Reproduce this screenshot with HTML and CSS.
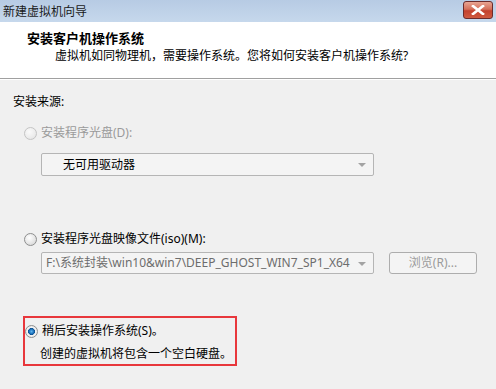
FILE: index.html
```html
<!DOCTYPE html>
<html lang="zh-CN">
<head>
    <meta charset="UTF-8">
    <title>新建虚拟机向导</title>
    <link rel="stylesheet" href="styles.css">
</head>
<body>
    <div class="dialog">
        <!-- Title bar -->
        <div class="titlebar">
            <span class="title-text">新建虚拟机向导</span>
            <span class="close-btn">
                <svg width="14" height="10" viewBox="0 0 14 10">
                    <path d="M2 1 L12 9 M12 1 L2 9" stroke="#fff" stroke-width="2.6" stroke-linecap="square"/>
                </svg>
            </span>
        </div>

        <!-- Header -->
        <div class="header">
            <div class="header-title">安装客户机操作系统</div>
            <div class="header-sub">虚拟机如同物理机，需要操作系统。您将如何安装客户机操作系统?</div>
        </div>

        <!-- Body -->
        <div class="content">
            <div class="group-label">安装来源:</div>

            <div class="option option-disc">
                <span class="radio disabled"></span>
                <span class="label disabled-text">安装程序光盘(D):</span>
            </div>
            <div class="combo combo-disc">
                <span class="combo-text">无可用驱动器</span>
                <span class="arrow"></span>
            </div>

            <div class="option option-iso">
                <span class="radio"></span>
                <span class="label">安装程序光盘映像文件(iso)(M):</span>
            </div>
            <div class="iso-row">
                <div class="combo combo-iso">
                    <span class="combo-text path">F:\系统封装\win10&amp;win7\DEEP_GHOST_WIN7_SP1_X64</span>
                    <span class="arrow"></span>
                </div>
                <div class="browse-btn">浏览(R)...</div>
            </div>

            <div class="highlight">
                <div class="option option-later">
                    <span class="radio checked"></span>
                    <span class="label">稍后安装操作系统(S)。</span>
                </div>
                <div class="later-note">创建的虚拟机将包含一个空白硬盘。</div>
            </div>
        </div>
    </div>
</body>
</html>
```

FILE: styles.css
```css
body {
    margin: 0;
    font-family: "Noto Sans", "Noto Sans CJK SC", sans-serif;
    font-size: 12px;
    line-height: 16px;
    color: #000;
}
.dialog {
    width: 496px;
    height: 389px;
    background-color: #f0f0f0;
    overflow: hidden;
}
.titlebar {
    height: 22px;
    display: flex;
    align-items: center;
    justify-content: space-between;
    background: linear-gradient(#b7cbe4, #c6d8ec);
    padding: 0 3px;
}
.title-text {
    color: #1a1a1a;
    margin-top: 1px;
}
.close-btn {
    width: 30px;
    height: 18px;
    margin-top: -3px;
    box-sizing: border-box;
    border: 1px solid #6b2b2b;
    border-radius: 3px;
    background: linear-gradient(#e8a593 0%, #d4705a 45%, #c3412d 55%, #cf5a40 100%);
    display: flex;
    align-items: center;
    justify-content: center;
}
.header {
    height: 55px;
    background-color: #fff;
    border-bottom: 1px solid #a0a0a0;
    box-shadow: 0 1px 0 #fff;
    padding-top: 8px;
    box-sizing: border-box;
    height: 57px;
}
.header-title {
    font-weight: bold;
    font-size: 13px;
    padding-left: 27px;
}
.header-sub {
    padding-left: 55px;
    margin-top: 2px;
}
.content {
    padding-left: 13px;
    padding-top: 15px;
}
.option {
    display: flex;
    align-items: center;
    height: 16px;
}
.option-disc {
    margin-top: 15px;
    margin-left: 11px;
}
.option-iso {
    margin-top: 55px;
    margin-left: 11px;
}
.label {
    margin-left: 4px;
}
.disabled-text {
    color: #9a9a9a;
}
.radio {
    width: 11px;
    height: 11px;
    border-radius: 50%;
    border: 1px solid #8e8f8f;
    background: radial-gradient(circle at 40% 35%, #fff 0%, #e6e6e6 55%, #cfcfcf 100%);
    flex-shrink: 0;
}
.radio.disabled {
    border-color: #c4c4c4;
    background: radial-gradient(circle at 40% 35%, #fafafa 0%, #ececec 60%, #dedede 100%);
}
.radio.checked {
    background: radial-gradient(circle, #5fb4ee 0%, #1a6fb8 30%, #0d4f8f 42%, #f4f4f4 48%, #dcdcdc 100%);
}
.combo {
    display: flex;
    align-items: center;
    justify-content: space-between;
    box-sizing: border-box;
    width: 333px;
    border: 1px solid #b5b5b5;
    border-radius: 2px;
    background-color: #f4f4f4;
    margin-left: 28px;
}
.combo-disc {
    height: 23px;
    margin-top: 12px;
    padding-left: 21px;
    padding-right: 7px;
}
.iso-row {
    display: flex;
    align-items: center;
    margin-top: 5px;
}
.combo-iso {
    height: 22px;
    padding-left: 4px;
    padding-right: 7px;
}
.combo-text.path {
    color: #6d6d6d;
    white-space: nowrap;
    overflow: hidden;
    width: 308px;
}
.arrow {
    width: 0;
    height: 0;
    border-left: 4px solid transparent;
    border-right: 4px solid transparent;
    border-top: 4px solid #a3a3a3;
    margin-top: 1px;
}
.browse-btn {
    width: 88px;
    height: 22px;
    box-sizing: border-box;
    margin-left: 15px;
    border: 1px solid #adadad;
    border-radius: 3px;
    background-color: #f4f4f4;
    color: #9a9a9a;
    display: flex;
    align-items: center;
    justify-content: center;
}
.highlight {
    width: 214px;
    height: 50px;
    box-sizing: border-box;
    margin-left: 10px;
    margin-top: 42px;
    border: 2px solid #e8373c;
    padding-top: 5px;
}
.option-later .radio {
    margin-left: 0;
}
.later-note {
    margin-left: 15px;
    margin-top: 7px;
}
```
